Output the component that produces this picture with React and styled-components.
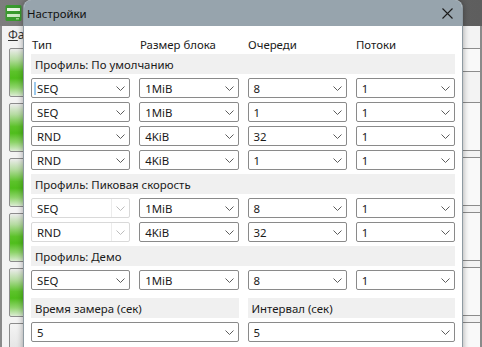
import React from "react";
import styled, { createGlobalStyle } from "styled-components";

const GlobalStyle = createGlobalStyle`
  html, body {
    margin: 0;
    padding: 0;
    overflow: hidden;
  }
  body {
    font-family: "Noto Sans", "Liberation Sans", sans-serif;
    color: #1a1a1a;
  }
`;

const Desktop = styled.div`
  position: relative;
  width: 482px;
  height: 347px;
  overflow: hidden;
  background: #f3f3f3;
`;

/* ---- main window behind the dialog ---- */

const BgTitle = styled.div`
  height: 26px;
  display: flex;
  align-items: center;
  padding-left: 5px;
  background: linear-gradient(to right, #7d7d7d, #666 60%, #5e5e5e);
`;

const BgBody = styled.div`
  display: flex;
  flex-direction: column;
  height: 321px;
  border-left: 2px solid #8a8a8a;
  border-right: 2px solid #8a8a8a;
  background: #f3f3f3;
`;

const BgMenu = styled.div`
  height: 22px;
  display: flex;
  align-items: center;
  padding-left: 6px;
  font-size: 12px;
  color: #333;
  white-space: nowrap;
`;

const BgColumns = styled.div`
  flex: 1;
  display: flex;
  justify-content: space-between;
  padding: 5px 0 0 7px;
`;

const BgLeft = styled.div`
  display: flex;
  flex-direction: column;
  gap: 6px;
  width: 70px;
`;

const TestButton = styled.div`
  height: ${(p) => p.$h}px;
  border: 1px solid #8c8c8c;
  border-radius: 2px;
  background: ${(p) =>
    p.$green
      ? "linear-gradient(to bottom, #ececec 0%, #b6dca2 22%, #5cc22a 48%, #4fbd1c 62%, #8fd46c 82%, #dcecd4 100%)"
      : "linear-gradient(to bottom, #f4f4f4, #e2e2e2)"};
`;

const BgRight = styled.div`
  display: flex;
  flex-direction: column;
  gap: 6px;
  width: 30px;
`;

const ResultBox = styled.div`
  height: ${(p) => p.$h}px;
  margin-top: ${(p) => p.$mt || 0}px;
  border: 1px solid #8c8c8c;
  border-right: none;
  background: #f9f9f9;
  overflow: hidden;
  display: flex;
  align-items: center;
`;

const Digit = styled.div`
  width: 14px;
  height: 26px;
  margin-left: -9px;
  border-radius: 50%;
  background: #0a0a14;
`;

/* ---- settings dialog ---- */

const Dialog = styled.div`
  position: absolute;
  left: 23px;
  top: 0;
  box-sizing: border-box;
  width: 440px;
  height: 360px;
  background: #fff;
  border: 1px solid #8e9aa2;
  border-top: none;
  border-radius: 8px 8px 0 0;
  box-shadow: 0 0 6px rgba(0, 0, 0, 0.35);
  overflow: hidden;
`;

const TitleBar = styled.div`
  height: 26px;
  display: flex;
  align-items: center;
  justify-content: space-between;
  padding: 0 9px 0 3px;
  background: #97a4ad;
  font-size: 11.4px;
  color: #111;
`;

const Body = styled.div`
  display: flex;
  flex-direction: column;
  padding: 9px 7px 0 7px;
`;

const HeadRow = styled.div`
  display: grid;
  grid-template-columns: repeat(4, 1fr);
  column-gap: 9px;
  height: 19px;
  align-items: center;
  font-size: 11.4px;
  padding-left: 1px;
`;

const Stack = styled.div`
  display: flex;
  flex-direction: column;
  gap: 4px;
  margin-top: ${(p) => p.$mt || 0}px;
`;

const Grid = styled.div`
  display: grid;
  grid-template-columns: repeat(${(p) => p.$cols}, 1fr);
  column-gap: 9px;
`;

const Band = styled.div`
  height: 20px;
  display: flex;
  align-items: center;
  padding-left: 4px;
  background: #f0f0f0;
  font-size: 11.4px;
`;

const Select = styled.div`
  height: 20px;
  box-sizing: border-box;
  display: flex;
  align-items: center;
  border: 1px solid ${(p) => (p.$disabled ? "#d9d9d9" : "#8a8a8a")};
  border-radius: 2px;
  background: #fff;
  font-size: 11.4px;
  padding-left: 5px;
`;

const Value = styled.span`
  flex: 1;
  display: flex;
  align-items: center;
`;

const Caret = styled.span`
  width: 2px;
  height: 13px;
  margin-right: 1px;
  margin-left: -3px;
  background: #9cc9ec;
`;

const Arrow = styled.span`
  width: 17px;
  height: 100%;
  display: flex;
  align-items: center;
  justify-content: center;
  border-left: 1px solid ${(p) => (p.$disabled ? "#ececec" : "transparent")};
`;

const Chevron = ({ color }) => (
  <svg width="9" height="5" viewBox="0 0 9 5">
    <path d="M0.5 0.5 L4.5 4.5 L8.5 0.5" fill="none" stroke={color} strokeWidth="1" />
  </svg>
);

const Combo = ({ value, disabled, focused }) => (
  <Select $disabled={disabled}>
    <Value>
      {focused && <Caret />}
      {value}
    </Value>
    <Arrow $disabled={disabled}>
      <Chevron color={disabled ? "#bdbdbd" : "#5c5c5c"} />
    </Arrow>
  </Select>
);

const AppIcon = () => (
  <svg width="17" height="18" viewBox="0 0 17 18">
    <rect x="0.5" y="1" width="16" height="16" rx="1.5" fill="#3a9a2e" />
    <rect x="2" y="4" width="13" height="3" fill="#e9f6e3" />
    <rect x="2" y="10" width="13" height="3" fill="#cfe9c6" />
    <rect x="11" y="14" width="3" height="1.5" fill="#9bd88a" />
  </svg>
);

const CloseIcon = () => (
  <svg width="11" height="11" viewBox="0 0 11 11">
    <path d="M0.5 0.5 L10.5 10.5 M10.5 0.5 L0.5 10.5" stroke="#1b1b1b" strokeWidth="1.1" />
  </svg>
);

const profiles = [
  {
    title: "Профиль: По умолчанию",
    rows: [
      ["SEQ", "1MiB", "8", "1"],
      ["SEQ", "1MiB", "1", "1"],
      ["RND", "4KiB", "32", "1"],
      ["RND", "4KiB", "1", "1"],
    ],
  },
  {
    title: "Профиль: Пиковая скорость",
    lockType: true,
    rows: [
      ["SEQ", "1MiB", "8", "1"],
      ["RND", "4KiB", "32", "1"],
    ],
  },
  {
    title: "Профиль: Демо",
    rows: [["SEQ", "1MiB", "8", "1"]],
  },
];

const App = () => {
  return (
    <Desktop>
      <GlobalStyle />
      <BgTitle>
        <AppIcon />
      </BgTitle>
      <BgBody>
        <BgMenu>
          <span>
            <u>Ф</u>а
          </span>
        </BgMenu>
        <BgColumns>
          <BgLeft>
            <TestButton $h={47} $green />
            <TestButton $h={47} $green />
            <TestButton $h={47} $green />
            <TestButton $h={47} $green />
            <TestButton $h={47} $green />
            <TestButton $h={30} />
          </BgLeft>
          <BgRight>
            <ResultBox $h={22}>
              <svg width="8" height="5" viewBox="0 0 8 5">
                <path d="M1 0.5 L4 4.5" stroke="#777" fill="none" />
              </svg>
            </ResultBox>
            <ResultBox $h={47} $mt={24}>
              <Digit />
            </ResultBox>
            <ResultBox $h={47}>
              <Digit />
            </ResultBox>
            <ResultBox $h={47}>
              <Digit />
            </ResultBox>
            <ResultBox $h={47}>
              <Digit />
            </ResultBox>
            <ResultBox $h={30} />
          </BgRight>
        </BgColumns>
      </BgBody>

      <Dialog>
        <TitleBar>
          <span>Настройки</span>
          <CloseIcon />
        </TitleBar>
        <Body>
          <HeadRow>
            <span>Тип</span>
            <span>Размер блока</span>
            <span>Очереди</span>
            <span>Потоки</span>
          </HeadRow>
          <Stack>
            {profiles.map((profile, p) => (
              <React.Fragment key={profile.title}>
                <Band>{profile.title}</Band>
                {profile.rows.map((row, i) => (
                  <Grid $cols={4} key={i}>
                    {row.map((v, j) => (
                      <Combo
                        key={j}
                        value={v}
                        disabled={profile.lockType && j === 0}
                        focused={p === 0 && i === 0 && j === 0}
                      />
                    ))}
                  </Grid>
                ))}
              </React.Fragment>
            ))}
          </Stack>
          <Stack $mt={8}>
            <Grid $cols={2}>
              <Band>Время замера (сек)</Band>
              <Band>Интервал (сек)</Band>
            </Grid>
            <Grid $cols={2}>
              <Combo value="5" />
              <Combo value="5" />
            </Grid>
          </Stack>
        </Body>
      </Dialog>
    </Desktop>
  );
};

export default App;
